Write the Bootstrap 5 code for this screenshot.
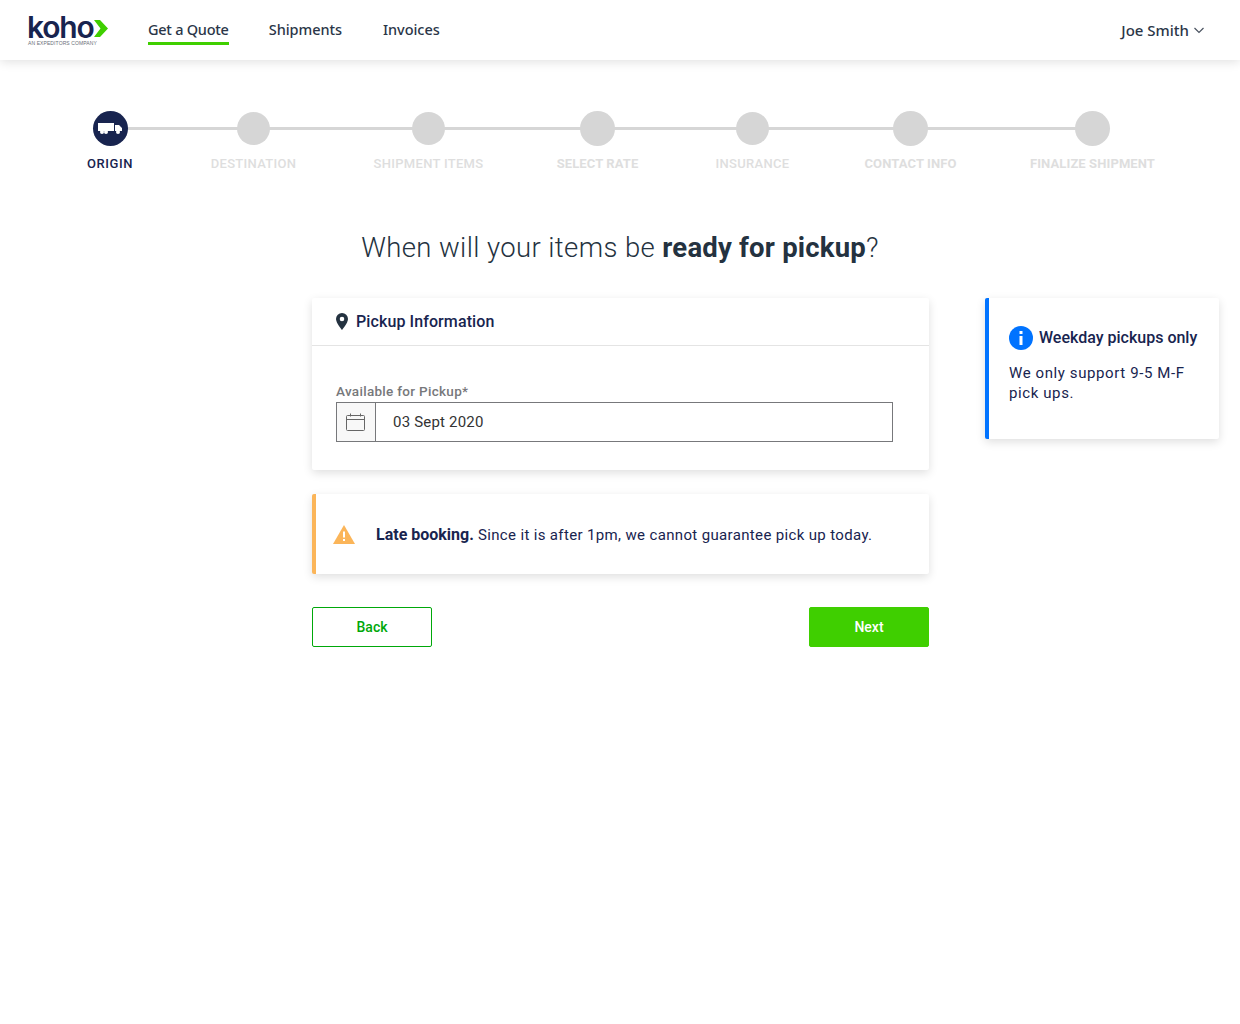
<!DOCTYPE html>
<html lang="en">
<head>
  <meta charset="utf-8" />
  <meta name="viewport" content="width=device-width, initial-scale=1" />
  <title>Koho - Pickup</title>
  <link href="https://cdn.jsdelivr.net/npm/bootstrap@5.3.0/dist/css/bootstrap.min.css" rel="stylesheet" />
  <style>
    body {
      font-family: Roboto, "Liberation Sans", sans-serif;
      color: #18244f;
      background: #fff;
    }
    /* Header */
    .top-bar {
      height: 60px;
      padding: 0 36px 0 28px;
      background: #fff;
      box-shadow: 0 2px 10px rgba(0, 0, 0, .12);
    }
    .logo-box { width: 80px; margin-right: 40px; margin-top: 1px; }
    .logo-word {
      font-family: Inter, sans-serif;
      font-size: 30px;
      font-weight: 600;
      line-height: 24px;
      letter-spacing: -1.2px;
      color: #18244f;
      margin-left: -1px;
    }
    .logo-sub {
      font-family: "Liberation Sans", sans-serif;
      font-size: 5px;
      line-height: 6px;
      margin-top: 1px;
      letter-spacing: .1px;
      color: #6b6f78;
      white-space: nowrap;
    }
    .top-link {
      font-family: "Noto Sans", sans-serif;
      font-size: 14.5px;
      font-weight: 500;
      letter-spacing: -.05px;
      color: #2b3648;
      text-decoration: none;
      padding-bottom: 2px;
      border-bottom: 3px solid transparent;
    }
    .top-link.on { border-bottom-color: #3fcf00; letter-spacing: -.25px; margin-right: -1px; }
    .top-links { gap: 41px; margin-top: 4px; }
    .user-box { gap: 5px; }
    .user-name {
      font-family: "Noto Sans", sans-serif;
      font-size: 15px;
      font-weight: 500;
      color: #2b3648;
      margin-top: 1px;
    }
    /* Stepper */
    .stepper {
      position: relative;
      display: grid;
      grid-template-columns: 46px 91px 109px 79px 81px 85px 129px;
      column-gap: 75px;
      margin: 51px 0 0 87px;
      width: 1070px;
    }
    .stepper::before {
      content: "";
      position: absolute;
      left: 23px;
      width: 982px;
      top: 16px;
      height: 3px;
      background: #d6d6d6;
    }
    .step-item { position: relative; }
    .step-dot {
      width: 33px;
      height: 33px;
      border-radius: 50%;
      background: #d6d6d6;
      margin: 1px 0 10px;
    }
    .step-item.big .step-dot { width: 35px; height: 35px; margin: 0 0 9px; }
    .step-item.on .step-dot { background: #18244f; }
    .step-label {
      font-size: 13px;
      line-height: 18px;
      font-weight: 500;
      letter-spacing: .3px;
      color: #dedede;
      white-space: nowrap;
    }
    .step-item.big .step-label { font-weight: 700; letter-spacing: .1px; }
    .step-item.on .step-label { color: #18244f; font-weight: 500; letter-spacing: .6px; }
    /* Heading */
    .page-title {
      margin: 57px 0 32px;
      font-size: 27.5px;
      line-height: 36px;
      font-weight: 300;
      letter-spacing: .4px;
      color: #243240;
    }
    .page-title b { font-weight: 700; letter-spacing: .2px; }
    /* Body grid */
    .main-grid {
      display: grid;
      grid-template-columns: 312px 617px 1fr;
    }
    .panel {
      background: #fff;
      border-radius: 2px;
      box-shadow: 0 3px 10px rgba(0, 0, 0, .13);
    }
    .panel-head {
      height: 48px;
      padding: 0 24px;
      border-bottom: 1px solid #e4e4e4;
      gap: 8px;
      font-size: 16px;
      font-weight: 500;
      letter-spacing: .1px;
    }
    .panel-head span { padding-top: 1px; }
    .panel-body { padding: 37px 36px 28px 24px; }
    .field-label {
      font-size: 13.5px;
      line-height: 16px;
      font-weight: 500;
      color: #77787b;
      letter-spacing: .3px;
      margin-bottom: 3px;
      display: block;
    }
    .date-field { height: 40px; border: 1px solid #77787b; }
    .date-icon {
      width: 39px;
      padding-right: 1px;
      background: #f8f8f8;
      border-right: 1px solid #77787b;
    }
    .date-value {
      padding-left: 17px;
      font-size: 15px;
      font-weight: 400;
      letter-spacing: .2px;
      color: #333;
    }
    .late-box {
      margin-top: 24px;
      height: 80px;
      padding-left: 17px;
      border-left: 4px solid #fbb559;
      gap: 21px;
      font-size: 15px;
      font-weight: 400;
      letter-spacing: .35px;
    }
    .late-box div { padding-top: 2px; }
    .late-box b { font-size: 16px; font-weight: 700; letter-spacing: 0; }
    .btn-row { margin-top: 33px; }
    .btn-koho {
      width: 120px;
      height: 40px;
      border-radius: 2px;
      font-size: 14px;
      font-weight: 500;
      line-height: 38px;
      padding: 0;
    }
    .btn-koho.plain { background: #fff; border: 1px solid #00a80a; color: #00a80a; }
    .btn-koho.filled { background: #3fcf00; border: 1px solid #3fcf00; color: #fff; }
    .side-note {
      margin-left: 56px;
      width: 234px;
      height: 141px;
      padding: 28px 10px 0 20px;
      border-left: 4px solid #0073ff;
    }
    .side-title { font-size: 16px; font-weight: 500; gap: 6px; line-height: 24px; white-space: nowrap; }
    .side-text {
      margin: 13px 0 0;
      width: 190px;
      font-size: 15px;
      line-height: 20px;
      font-weight: 400;
      letter-spacing: .6px;
    }
  </style>
</head>
<body>
  <header class="top-bar d-flex align-items-center">
    <div class="logo-box">
      <div class="d-flex align-items-center">
        <span class="logo-word">koho</span>
        <svg width="14" height="17" viewBox="0 0 14 17" class="flex-shrink-0" style="margin-left:0;margin-top:3px"><path d="M0 0h6L14 8.500 6 17H0l6.500-8.500z" fill="#3fcf00"/></svg>
      </div>
      <div class="logo-sub">AN EXPEDITORS COMPANY</div>
    </div>
    <nav class="top-links d-flex align-items-center">
      <a class="top-link on" href="#">Get a Quote</a>
      <a class="top-link" href="#">Shipments</a>
      <a class="top-link" href="#">Invoices</a>
    </nav>
    <div class="user-box ms-auto d-flex align-items-center">
      <span class="user-name">Joe Smith</span>
      <svg width="10" height="7" viewBox="0 0 10 7"><path d="M.5 1l4.500 4.500L9.500 1" fill="none" stroke="#4a5360" stroke-width="1.200"/></svg>
    </div>
  </header>

  <div class="stepper">
    <div class="step-item big on d-flex flex-column align-items-center">
      <div class="step-dot d-flex align-items-center justify-content-center">
        <svg width="25" height="13" viewBox="0 0 25 13"><path d="M0 1h16v8H0zM17 3h4l3 3v3h-7z" fill="#fff"/><circle cx="4" cy="10" r="2" fill="#fff"/><circle cx="8" cy="10" r="2" fill="#fff"/><circle cx="20" cy="10" r="2" fill="#fff"/></svg>
      </div>
      <div class="step-label">ORIGIN</div>
    </div>
    <div class="step-item d-flex flex-column align-items-center"><div class="step-dot"></div><div class="step-label">DESTINATION</div></div>
    <div class="step-item d-flex flex-column align-items-center"><div class="step-dot"></div><div class="step-label">SHIPMENT ITEMS</div></div>
    <div class="step-item big d-flex flex-column align-items-center"><div class="step-dot"></div><div class="step-label">SELECT RATE</div></div>
    <div class="step-item d-flex flex-column align-items-center"><div class="step-dot"></div><div class="step-label">INSURANCE</div></div>
    <div class="step-item big d-flex flex-column align-items-center"><div class="step-dot"></div><div class="step-label">CONTACT INFO</div></div>
    <div class="step-item big d-flex flex-column align-items-center"><div class="step-dot"></div><div class="step-label">FINALIZE SHIPMENT</div></div>
  </div>

  <h1 class="page-title text-center">When will your items be <b>ready for pickup</b>?</h1>

  <div class="main-grid">
    <div></div>
    <div>
      <section class="panel">
        <div class="panel-head d-flex align-items-center">
          <svg width="12" height="17" viewBox="0 0 12 17"><path d="M6 0a6 6 0 0 0-6 6c0 4 6 11 6 11s6-7 6-11a6 6 0 0 0-6-6zm0 8.300A2.300 2.300 0 1 1 6 3.700a2.300 2.300 0 0 1 0 4.600z" fill="#243240"/></svg>
          <span>Pickup Information</span>
        </div>
        <div class="panel-body">
          <label class="field-label">Available for Pickup*</label>
          <div class="date-field d-flex">
            <div class="date-icon d-flex align-items-center justify-content-center">
              <svg width="19" height="18" viewBox="0 0 19 18"><g fill="none" stroke="#666" stroke-width="1"><rect x=".5" y="2.500" width="18" height="15" rx="1"/><path d="M.5 6.500h18M4.500 .5v3M14.500 .5v3"/></g></svg>
            </div>
            <div class="date-value d-flex align-items-center">03 Sept 2020</div>
          </div>
        </div>
      </section>

      <section class="panel late-box d-flex align-items-center">
        <svg width="22" height="19" viewBox="0 0 22 19"><path d="M11 0l11 19H0z" fill="#fbb559"/><path d="M10 6.500h2v6h-2zM10 14h2v2h-2z" fill="#fff"/></svg>
        <div><b>Late booking.</b> Since it is after 1pm, we cannot guarantee pick up today.</div>
      </section>

      <div class="btn-row d-flex justify-content-between">
        <button type="button" class="btn btn-koho plain">Back</button>
        <button type="button" class="btn btn-koho filled">Next</button>
      </div>
    </div>
    <aside>
      <div class="panel side-note">
        <div class="side-title d-flex align-items-center">
          <svg width="24" height="24" viewBox="0 0 24 24"><circle cx="12" cy="12" r="12" fill="#0073ff"/><path d="M10.500 10h3v9h-3zM10.500 5h3v3h-3z" fill="#fff"/></svg>
          <span>Weekday pickups only</span>
        </div>
        <p class="side-text">We only support 9-5 M-F pick ups.</p>
      </div>
    </aside>
  </div>

  <script src="https://cdn.jsdelivr.net/npm/bootstrap@5.3.0/dist/js/bootstrap.bundle.min.js"></script>
</body>
</html>
